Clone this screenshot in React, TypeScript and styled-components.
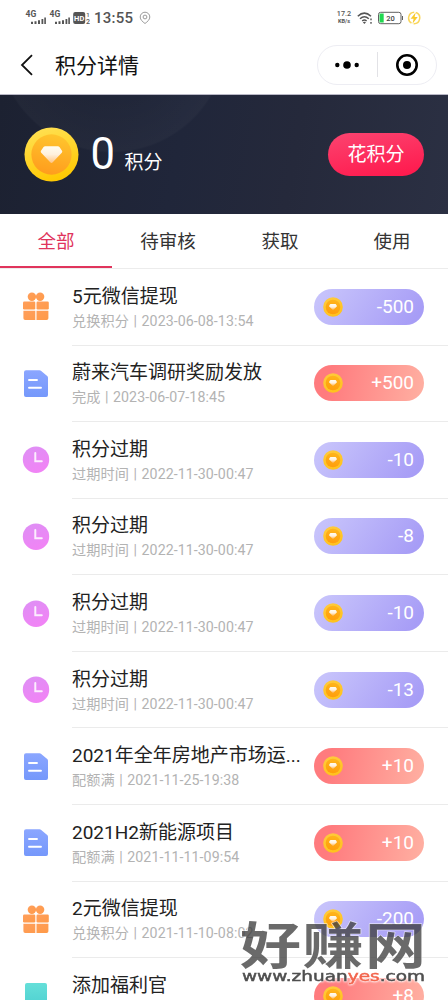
import React from "react";
import styled, { createGlobalStyle, css } from "styled-components";

const Global = createGlobalStyle`
  html, body { margin: 0; padding: 0; background: #fff; }
  body { overflow: hidden; }
  * { box-sizing: border-box; }
`;

const Screen = styled.main`
  position: relative;
  width: 448px;
  height: 1000px;
  overflow: hidden;
  background: #fff;
  color: #222;
  font-family: Roboto, "Noto Sans CJK SC", sans-serif;
`;

const StatusBar = styled.div`
  display: flex;
  align-items: center;
  justify-content: space-between;
  height: 35px;
  padding: 0 27px 0 25px;
  color: #555;
`;

const StatusGroup = styled.div`
  display: flex;
  align-items: center;
`;

const Clock = styled.span`
  margin: 0 6px 0 4px;
  font-size: 15px;
  line-height: 18px;
  font-weight: 500;
  letter-spacing: 0.22px;
`;

const Speed = styled.span`
  display: flex;
  flex-direction: column;
  align-items: center;
  width: 16px;
  margin-right: 5px;
  font-size: 7.2px;
  font-weight: 500;
  line-height: 6.5px;
  small { font-size: 5.6px; font-weight: 700; }
`;

const StatusIcons = styled.div`
  display: flex;
  align-items: center;
  gap: 3px;
`;

const NavBar = styled.header`
  display: flex;
  align-items: center;
  height: 60px;
  padding: 0 11px 0 20px;
  border-bottom: 1px solid #b9b8c6;
`;

const PageTitle = styled.h1`
  flex: 1;
  margin: 2px 0 0 21px;
  font-size: 21px;
  line-height: 30px;
  font-weight: 400;
  color: #111;
`;

const Capsule = styled.div`
  display: flex;
  align-items: center;
  width: 120px;
  height: 40px;
  border: 1px solid #ededf3;
  border-radius: 20px;
`;

const CapsuleButton = styled.div`
  flex: 1;
  display: flex;
  align-items: center;
  justify-content: center;
`;

const CapsuleDivider = styled.div`
  width: 1px;
  height: 25px;
  background: #e2e2e6;
`;

const Banner = styled.section`
  display: flex;
  align-items: center;
  height: 119px;
  padding: 0 24px;
  color: #fff;
  background:
    radial-gradient(circle at 112px -58px, rgba(255, 255, 255, 0) 20px, rgba(255, 255, 255, 0.01) 70px, rgba(255, 255, 255, 0.028) 114px, transparent 116px),
    linear-gradient(100deg, #1c2131 0%, #20263a 40%, #25293b 65%, #2b3043 100%);
`;

const Balance = styled.div`
  flex: 1;
  display: flex;
  align-items: baseline;
  margin-left: 11.5px;
  font-size: 19px;
  strong {
    margin-right: 9.5px;
    font-size: 43.5px;
    line-height: 52px;
    font-weight: 400;
  }
`;

const SpendButton = styled.button`
  width: 96px;
  height: 43px;
  padding: 0;
  border: 0;
  border-radius: 22px;
  background: linear-gradient(170deg, #fb4470, #ff174b);
  color: #fff;
  font: 400 19px/28px Roboto, "Noto Sans CJK SC", sans-serif;
`;

const Tabs = styled.nav`
  display: flex;
  height: 55px;
  border-bottom: 1px solid #ececec;
`;

const Tab = styled.div<{ $active?: boolean }>`
  flex: 1;
  height: 54px;
  text-align: center;
  font-size: 18.5px;
  line-height: 56px;
  color: #333;
  ${(p) => p.$active && css`
    color: #e0345c;
    border-bottom: 2px solid #e0345c;
  `}
`;

const List = styled.ul`
  margin: 0;
  padding: 0;
  list-style: none;
`;

const Row = styled.li`
  display: flex;
  height: 76.57px;
`;

const IconCell = styled.div`
  display: flex;
  align-items: center;
  justify-content: center;
  width: 72px;
`;

const RowBody = styled.div`
  flex: 1;
  min-width: 0;
  display: flex;
  align-items: center;
  justify-content: space-between;
  padding-right: 24px;
  border-bottom: 1px solid #ebebeb;
`;

const RowText = styled.div`
  width: 230px;
  padding-top: 1px;
`;

const RowTitle = styled.div`
  font-size: 19px;
  line-height: 28px;
  color: #222;
  white-space: nowrap;
`;

const RowMeta = styled.div`
  font-size: 14.2px;
  line-height: 21px;
  letter-spacing: 0.07px;
  word-spacing: 0.9px;
  color: #b3b3b3;
  white-space: nowrap;
`;

const Amount = styled.div<{ $gain: boolean }>`
  display: flex;
  align-items: center;
  justify-content: space-between;
  width: 110px;
  height: 36px;
  padding: 0 10px 0 9px;
  border-radius: 18px;
  color: #fff;
  font-size: 19px;
  line-height: 36px;
  background: ${(p) => p.$gain
    ? "linear-gradient(100deg, #ff7b7e 15%, #ffada0 95%)"
    : "linear-gradient(125deg, #c6c2fb 10%, #a79df6 90%)"};
`;

const Watermark = styled.div`
  position: absolute;
  left: 236px;
  top: 914px;
  line-height: 0;
  .url {
    filter: drop-shadow(0 0 1px #fff) drop-shadow(0 0 1px #fff);
  }
`;

function Coin({ size, small }: { size: number; small?: boolean }) {
  const id = small ? "s" : "l";
  return (
    <svg width={size} height={size} viewBox="0 0 56 56">
      <defs>
        <linearGradient id={`rim-${id}`} x1="0.3" y1="0" x2="0.6" y2="1">
          <stop offset="0" stopColor={small ? "#ffca3c" : "#ffe052"} />
          <stop offset="1" stopColor={small ? "#ffc21c" : "#ffc800"} />
        </linearGradient>
        <linearGradient id={`face-${id}`} x1="0.6" y1="0" x2="0.4" y2="1">
          <stop offset="0" stopColor={small ? "#ffb51c" : "#ffc52d"} />
          <stop offset="1" stopColor={small ? "#ff9d0b" : "#ff9c1d"} />
        </linearGradient>
        <linearGradient id={`gem-${id}`} x1="0" y1="0" x2="0" y2="1">
          <stop offset="0" stopColor="#fffdf2" />
          <stop offset="0.5" stopColor="#fff0dc" />
          <stop offset="1" stopColor={small ? "#ffab3c" : "#ffc483"} />
        </linearGradient>
      </defs>
      <circle cx="28" cy="28" r="27.5" fill={`url(#rim-${id})`} />
      <circle cx="28" cy="28" r="20.5" fill={`url(#face-${id})`} />
      <path d="M21.5 19.5h13q1 0 1.6.8l2.6 4q.7 1.1-.2 2L29.3 36q-1.3 1.3-2.6 0L17.5 26.3q-.9-.9-.2-2l2.6-4q.6-.8 1.6-.8Z" fill={`url(#gem-${id})`} />
    </svg>
  );
}

function Signal() {
  return (
    <svg width="23.5" height="18" viewBox="0 0 23.5 18" fill="#555">
      <text x="0.5" y="7.5" fontFamily="Roboto" fontWeight="700" fontSize="8.5">4G</text>
      <path d="M6 12.7h2v2.3H6zM9.5 12.2h2v2.8h-2zM13 11.2h2v3.8h-2zM16.5 10h1.8v5h-1.8zM19.3 8.5h1.6V15h-1.6z" />
    </svg>
  );
}

function HdBadge() {
  return (
    <svg width="18" height="18" viewBox="0 0 18 18" fill="#555">
      <rect x="1.2" y="3" width="12" height="12" rx="2" />
      <text x="2.1" y="11.8" fill="#fff" fontFamily="Roboto" fontWeight="700" fontSize="7.5">HD</text>
      <text x="14.3" y="7.5" fontFamily="Roboto" fontWeight="500" fontSize="6">1</text>
      <text x="14" y="15" fontFamily="Roboto" fontWeight="500" fontSize="7">2</text>
    </svg>
  );
}

function PinIcon() {
  return (
    <svg width="12" height="14" viewBox="0 0 12 14" fill="none" stroke="#909090" strokeWidth="0.9">
      <path d="M6 12.5C3.5 10.6 1.2 8.7 1.2 6a4.8 4.8 0 0 1 9.6 0c0 2.7-2.3 4.6-4.8 6.5Z" />
      <circle cx="6" cy="6" r="1.9" />
    </svg>
  );
}

function WifiIcon() {
  return (
    <svg width="17" height="14" viewBox="0 0 17 14" fill="none" stroke="#555" strokeWidth="1.5">
      <path d="M.8 5.2Q7.3-1 14 5.2M3 7.7q4.4-4 8.8 0M5.2 10q2.2-1.9 4.4 0" />
      <path d="m5.8 11.3 1.6 1.7L9 11.3q-1.6-1.1-3.2 0Z" fill="#555" stroke="none" />
      <path d="M13.3 7.5h1.4v1.7h-1.4zM13.3 11h1.4v1.7h-1.4z" fill="#555" stroke="none" />
    </svg>
  );
}

function BatteryIcon() {
  return (
    <svg width="27" height="14" viewBox="0 0 27 14">
      <rect x="1.5" y="1.3" width="22.5" height="11.4" rx="2.2" fill="#fff" stroke="#606060" />
      <path d="M25 5h1v4h-1z" fill="#606060" />
      <path d="M3.5 2.5H6.7v9H3.5q-1 0-1-1v-7q0-1 1-1Z" fill="#22d851" />
      <text x="9.3" y="9.8" fontFamily="Roboto" fontWeight="500" fontSize="7.5" fill="#444">20</text>
    </svg>
  );
}

function ChargeIcon() {
  return (
    <svg width="14" height="14" viewBox="0 0 14 14">
      <path d="M9 1.5a5.8 5.8 0 0 1-2.4 11.2M4.5 12A5.8 5.8 0 0 1 7.2 1.2" fill="none" stroke="#f9d65c" strokeWidth="1.5" />
      <path d="M8.8 1.2 3.6 7.8h3L5.5 12.8l5.2-6.7H7.6Z" fill="#f9ca2c" />
    </svg>
  );
}

type Kind = "gift" | "doc" | "clock" | "card";

function KindIcon({ kind }: { kind: Kind }) {
  return (
    <svg width="28" height="30" viewBox="0 0 28 30">
      <defs>
        <linearGradient id="gift" x1="0" y1="0" x2="1" y2="1">
          <stop offset="0" stopColor="#ff9f5c" />
          <stop offset="1" stopColor="#ff9a48" />
        </linearGradient>
        <linearGradient id="doc" x1="0" y1="0" x2="0" y2="1">
          <stop offset="0" stopColor="#8ba6ff" />
          <stop offset="1" stopColor="#7598fb" />
        </linearGradient>
        <linearGradient id="clock" x1="0" y1="0" x2="0.4" y2="1">
          <stop offset="0" stopColor="#dd90f5" />
          <stop offset="1" stopColor="#f084f5" />
        </linearGradient>
        <linearGradient id="card" x1="0" y1="0" x2="0" y2="1">
          <stop offset="0" stopColor="#65dfd9" />
          <stop offset="1" stopColor="#4ccfd0" />
        </linearGradient>
      </defs>
      {kind === "gift" && (
        <g fill="url(#gift)">
          <circle cx="9.9" cy="4.8" r="4.2" />
          <circle cx="18.1" cy="4.8" r="4.2" />
          <rect x="1" y="9.5" width="12.3" height="8" rx="1.2" />
          <rect x="14.5" y="9.5" width="12.3" height="8" rx="1.2" />
          <path d="M1.4 18.7h11.9v9.3H3.2q-1.8 0-1.8-1.8ZM14.5 18.7h11.9v7.5q0 1.8-1.8 1.8H14.5Z" />
        </g>
      )}
      {kind === "doc" && (
        <>
          <path d="M4 1.3h13.5q1 0 1.7.6l6 5.1q.8.7.8 1.800V26q0 1.900-1.900 1.900H3.900Q2 27.900 2 26V3.300Q2 1.300 4 1.300Z" fill="url(#doc)" />
          <path d="M7 11h8M7 18.8h12" stroke="#fff" strokeWidth="1.9" strokeLinecap="round" />
        </>
      )}
      {kind === "clock" && (
        <>
          <circle cx="14" cy="14.7" r="13.2" fill="url(#clock)" />
          <path d="M13.3 8v8.3h6.5" fill="none" stroke="#fff" strokeOpacity=".85" strokeWidth="2" strokeLinecap="round" />
        </>
      )}
      {kind === "card" && <rect x="3" y="2" width="22" height="26" rx="2" fill="url(#card)" />}
    </svg>
  );
}

const records: { kind: Kind; title: string; meta: string; amount: string }[] = [
  { kind: "gift", title: "5元微信提现", meta: "兑换积分 | 2023-06-08-13:54", amount: "-500" },
  { kind: "doc", title: "蔚来汽车调研奖励发放", meta: "完成 | 2023-06-07-18:45", amount: "+500" },
  { kind: "clock", title: "积分过期", meta: "过期时间 | 2022-11-30-00:47", amount: "-10" },
  { kind: "clock", title: "积分过期", meta: "过期时间 | 2022-11-30-00:47", amount: "-8" },
  { kind: "clock", title: "积分过期", meta: "过期时间 | 2022-11-30-00:47", amount: "-10" },
  { kind: "clock", title: "积分过期", meta: "过期时间 | 2022-11-30-00:47", amount: "-13" },
  { kind: "doc", title: "2021年全年房地产市场运...", meta: "配额满 | 2021-11-25-19:38", amount: "+10" },
  { kind: "doc", title: "2021H2新能源项目", meta: "配额满 | 2021-11-11-09:54", amount: "+10" },
  { kind: "gift", title: "2元微信提现", meta: "兑换积分 | 2021-11-10-08:02", amount: "-200" },
  { kind: "card", title: "添加福利官", meta: "", amount: "+8" },
];

export default function App() {
  return (
    <Screen>
      <Global />
      <StatusBar>
        <StatusGroup>
          <Signal />
          <Signal />
          <HdBadge />
          <Clock>13:55</Clock>
          <PinIcon />
        </StatusGroup>
        <StatusGroup>
          <Speed>17.2<small>KB/s</small></Speed>
          <StatusIcons>
            <WifiIcon />
            <BatteryIcon />
            <ChargeIcon />
          </StatusIcons>
        </StatusGroup>
      </StatusBar>
      <NavBar>
        <svg width="14" height="22" viewBox="0 0 14 22" fill="none" stroke="#111" strokeWidth="1.8">
          <path d="M12 1.2 2 11l10 9.8" />
        </svg>
        <PageTitle>积分详情</PageTitle>
        <Capsule>
          <CapsuleButton>
            <svg width="24" height="8" viewBox="0 0 24 8">
              <circle cx="2.3" cy="4" r="2.2" />
              <circle cx="12" cy="4" r="3.8" />
              <circle cx="21.7" cy="4" r="2.2" />
            </svg>
          </CapsuleButton>
          <CapsuleDivider />
          <CapsuleButton>
            <svg width="24" height="24" viewBox="0 0 24 24">
              <circle cx="12" cy="12" r="9.7" fill="none" stroke="#000" strokeWidth="2.6" />
              <circle cx="12" cy="12" r="4" />
            </svg>
          </CapsuleButton>
        </Capsule>
      </NavBar>
      <Banner>
        <Coin size={55} />
        <Balance><strong>0</strong>积分</Balance>
        <SpendButton>花积分</SpendButton>
      </Banner>
      <Tabs>
        <Tab $active>全部</Tab>
        <Tab>待审核</Tab>
        <Tab>获取</Tab>
        <Tab>使用</Tab>
      </Tabs>
      <List>
        {records.map((r, i) => (
          <Row key={i}>
            <IconCell><KindIcon kind={r.kind} /></IconCell>
            <RowBody>
              <RowText>
                <RowTitle>{r.title}</RowTitle>
                <RowMeta>{r.meta || "\u00a0"}</RowMeta>
              </RowText>
              <Amount $gain={r.amount[0] === "+"}>
                <Coin size={20} small />
                <span>{r.amount}</span>
              </Amount>
            </RowBody>
          </Row>
        ))}
      </List>
      <Watermark>
        <svg width="200" height="76" viewBox="0 0 200 76">
          <g transform="translate(4 49.5) scale(1 .82)" fontFamily="Noto Sans CJK SC, sans-serif" fontWeight="700" fontSize="61">
            <text x="0" y="0" textLength="186" fill="#3b3b3b" fillOpacity=".76" stroke="#fff" strokeOpacity=".6" strokeWidth="1.6" strokeLinejoin="round" paintOrder="stroke">好赚网</text>
          </g>
          <g className="url" transform="translate(6 66.5) scale(1 .82)" fontFamily="DejaVu Sans, sans-serif" fontWeight="400" fontSize="18" fill="#4f4f4f" stroke="#4f4f4f" strokeWidth="0.6">
            <text x="0" y="0" textLength="183" lengthAdjust="spacingAndGlyphs">
              www.zhuan<tspan fill="#f2644c" stroke="#f2644c">yes</tspan>.com
            </text>
          </g>
        </svg>
      </Watermark>
    </Screen>
  );
}
